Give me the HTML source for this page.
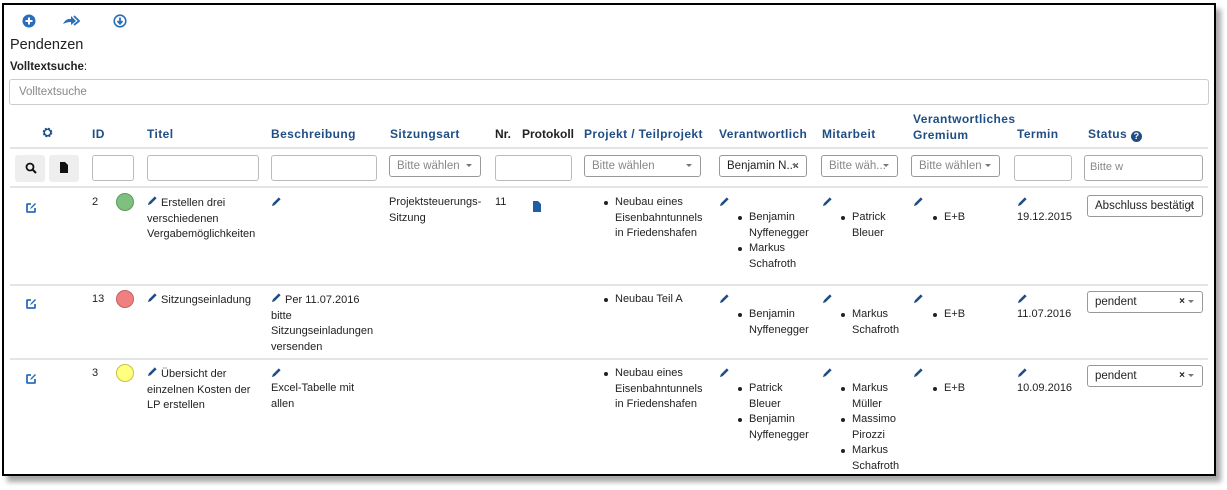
<!DOCTYPE html>
<html><head><meta charset="utf-8"><style>
*{margin:0;padding:0;box-sizing:border-box}
body{width:1227px;height:490px;background:#fff;position:relative;overflow:hidden;font-family:"Liberation Sans",Arial,sans-serif;font-size:11px;color:#222}
.frame{position:absolute;left:2px;top:3px;width:1214px;height:473px;border:2.5px solid #000;box-shadow:5px 6px 5px rgba(0,0,0,.35);background:#fff}
.a{position:absolute;line-height:15.5px;white-space:nowrap}
.h{font-weight:bold;color:#1f4e85;font-size:12px;letter-spacing:.4px}
.hl{position:absolute;left:10px;width:1198px;height:2px;background:#e4e4e4}
.in{position:absolute;height:26px;border:1px solid #bbb;border-radius:3px;background:#fff}
.sel{position:absolute;height:22px;border:1px solid #999;border-radius:3px;background:#fff;color:#888;font-size:11.5px;line-height:20px;padding-left:7px;overflow:hidden}
.sel:after{content:"";position:absolute;right:8px;top:8px;border:3.5px solid transparent;border-top:3.5px solid #777}
.btn{position:absolute;width:30px;height:27px;background:#eee;border-radius:3px}
ul{list-style:none}
li{position:relative;padding-left:0}
li:before{content:"";position:absolute;left:-11px;top:6px;width:4px;height:4px;border-radius:50%;background:#222}
.dot{position:absolute;width:18px;height:18px;border-radius:50%}
</style></head><body>
<div class="frame"></div>
<svg width="0" height="0" style="position:absolute"><defs>
<symbol id="p" viewBox="0 0 12 12"><path d="M1 11 L2 8 L8.5 1.5 L10.5 3.5 L4 10 Z" fill="#1f4e85"/></symbol>
<symbol id="e" viewBox="0 0 12 12"><path d="M6 2H2.5Q2 2 2 2.5V9.5Q2 10 2.5 10H9.5Q10 10 10 9.5V6" fill="none" stroke="#2a6ebb" stroke-width="1.8"/><path d="M5 7L6 5L10 1L11 2L7 6Z" fill="#2a6ebb"/></symbol>
</defs></svg>
<svg class="a" style="left:22px;top:14px" width="14" height="14"><circle cx="7" cy="7" r="6.5" fill="#2a6ebb"/><path d="M7 3.5V10.5M3.5 7H10.5" stroke="#fff" stroke-width="2"/></svg>
<svg class="a" style="left:62px;top:15px" width="18" height="12"><path d="M1 9Q4 3 9 4V1L14 6L9 10V7Q5 7 1 9Z" fill="#2a6ebb"/><path d="M12 1L17 6L12 10" fill="none" stroke="#2a6ebb" stroke-width="1.8"/></svg>
<svg class="a" style="left:113px;top:14px" width="14" height="14"><circle cx="7" cy="7" r="5.8" fill="none" stroke="#2a6ebb" stroke-width="1.6"/><path d="M7 3.5V9M4.5 7L7 9.8L9.5 7" fill="none" stroke="#2a6ebb" stroke-width="1.8"/></svg>
<div class="a" style="left:10px;top:36px;font-size:14.5px;line-height:18px">Pendenzen</div>
<div class="a" style="left:10px;top:60px;font-weight:bold;font-size:11.5px">Volltextsuche<span style="font-weight:normal">:</span></div>
<div class="in" style="left:9px;top:79px;width:1200px;height:26px;border-color:#ccc"></div>
<div class="a" style="left:19px;top:85px;color:#888;font-size:11.5px">Volltextsuche</div>
<svg class="a" style="left:42px;top:127px" width="11" height="11" viewBox="0 0 12 12"><circle cx="6" cy="6" r="4" fill="none" stroke="#1f4e85" stroke-width="2.5" stroke-dasharray="2 1.2"/><circle cx="6" cy="6" r="3.5" fill="none" stroke="#1f4e85" stroke-width="1.5"/></svg>
<div class="a h" style="left:92px;top:127px">ID</div>
<div class="a h" style="left:147px;top:127px">Titel</div>
<div class="a h" style="left:271px;top:127px">Beschreibung</div>
<div class="a h" style="left:390px;top:127px">Sitzungsart</div>
<div class="a h" style="left:495px;top:127px;color:#222;letter-spacing:0">Nr.</div>
<div class="a h" style="left:522px;top:127px;color:#222;letter-spacing:0">Protokoll</div>
<div class="a h" style="left:584px;top:127px">Projekt / Teilprojekt</div>
<div class="a h" style="left:719px;top:127px">Verantwortlich</div>
<div class="a h" style="left:822px;top:127px">Mitarbeit</div>
<div class="a h" style="left:913px;top:112px">Verantwortliches<br>Gremium</div>
<div class="a h" style="left:1017px;top:127px">Termin</div>
<div class="a h" style="left:1088px;top:127px">Status <span style="display:inline-block;width:11px;height:11px;border-radius:50%;background:#1f4e85;color:#fff;font-size:9px;line-height:11px;text-align:center;vertical-align:-1px;letter-spacing:0">?</span></div>
<div class="hl" style="top:147px"></div>
<div class="btn" style="left:15px;top:155px"></div>
<svg class="a" style="left:25px;top:162px" width="12" height="12"><circle cx="5" cy="5" r="3.5" fill="none" stroke="#111" stroke-width="1.8"/><path d="M7.5 7.5L11 11" stroke="#111" stroke-width="2"/></svg>
<div class="btn" style="left:49px;top:155px"></div>
<svg class="a" style="left:60px;top:162px" width="9" height="11"><path d="M0 0H5L8 3V11H0Z" fill="#111"/></svg>
<div class="in" style="left:92px;top:155px;width:42px"></div>
<div class="in" style="left:147px;top:155px;width:112px"></div>
<div class="in" style="left:271px;top:155px;width:106px"></div>
<div class="sel" style="left:389px;top:155px;width:92px">Bitte wählen</div>
<div class="in" style="left:495px;top:155px;width:77px"></div>
<div class="sel" style="left:584px;top:155px;width:117px">Bitte wählen</div>
<div class="sel" style="left:719px;top:155px;width:88px;color:#222">Benjamin N..<b style="font-size:10px">×</b></div>
<div class="sel" style="left:821px;top:155px;width:77px">Bitte wäh...</div>
<div class="sel" style="left:911px;top:155px;width:89px">Bitte wählen</div>
<div class="in" style="left:1014px;top:155px;width:58px"></div>
<div class="in" style="left:1084px;top:155px;width:119px;border-color:#aaa"></div>
<div class="a" style="left:1090px;top:160px;color:#888">Bitte w</div>
<div class="hl" style="top:186px"></div>
<svg class="a" style="left:25px;top:202px" width="12" height="12"><use href="#e"/></svg>
<div class="a" style="left:92px;top:195px">2</div>
<div class="dot" style="left:116px;top:193px;background:#7fbf7f;border:1px solid #5a9a5a"></div>
<div class="a" style="left:147px;top:195px"><svg width="11" height="11"><use href="#p"/></svg> Erstellen drei<br>verschiedenen<br>Vergabemöglichkeiten</div>
<svg class="a" style="left:271px;top:196px" width="11" height="11"><use href="#p"/></svg>
<div class="a" style="left:389px;top:195px">Projektsteuerungs-<br>Sitzung</div>
<div class="a" style="left:495px;top:195px">11</div>
<svg class="a" style="left:533px;top:201px" width="9" height="11"><path d="M0 0H5L8 3V11H0Z" fill="#1f5ea5"/></svg>
<ul class="a" style="left:615px;top:195px"><li>Neubau eines<br>Eisenbahntunnels<br>in Friedenshafen</li></ul>
<svg class="a" style="left:719px;top:196px" width="11" height="11"><use href="#p"/></svg>
<ul class="a" style="left:749px;top:210px"><li>Benjamin<br>Nyffenegger</li><li>Markus<br>Schafroth</li></ul>
<svg class="a" style="left:822px;top:196px" width="11" height="11"><use href="#p"/></svg>
<ul class="a" style="left:852px;top:210px"><li>Patrick<br>Bleuer</li></ul>
<svg class="a" style="left:913px;top:196px" width="11" height="11"><use href="#p"/></svg>
<ul class="a" style="left:944px;top:210px"><li>E+B</li></ul>
<svg class="a" style="left:1017px;top:196px" width="11" height="11"><use href="#p"/></svg>
<div class="a" style="left:1017px;top:210px">19.12.2015</div>
<div class="sel" style="left:1087px;top:195px;width:116px;color:#222">Abschluss bestätigt</div>
<div class="hl" style="top:284px"></div>
<svg class="a" style="left:25px;top:298px" width="12" height="12"><use href="#e"/></svg>
<div class="a" style="left:92px;top:292px">13</div>
<div class="dot" style="left:116px;top:290px;background:#f08080;border:1px solid #c06060"></div>
<div class="a" style="left:147px;top:292px"><svg width="11" height="11"><use href="#p"/></svg> Sitzungseinladung</div>
<div class="a" style="left:271px;top:292px"><svg width="11" height="11"><use href="#p"/></svg> Per 11.07.2016<br>bitte<br>Sitzungseinladungen<br>versenden</div>
<ul class="a" style="left:615px;top:292px"><li>Neubau Teil A</li></ul>
<svg class="a" style="left:719px;top:293px" width="11" height="11"><use href="#p"/></svg>
<ul class="a" style="left:749px;top:307px"><li>Benjamin<br>Nyffenegger</li></ul>
<svg class="a" style="left:822px;top:293px" width="11" height="11"><use href="#p"/></svg>
<ul class="a" style="left:852px;top:307px"><li>Markus<br>Schafroth</li></ul>
<svg class="a" style="left:913px;top:293px" width="11" height="11"><use href="#p"/></svg>
<ul class="a" style="left:944px;top:307px"><li>E+B</li></ul>
<svg class="a" style="left:1017px;top:293px" width="11" height="11"><use href="#p"/></svg>
<div class="a" style="left:1017px;top:307px">11.07.2016</div>
<div class="sel" style="left:1087px;top:291px;width:116px;color:#222">pendent<span style="position:absolute;right:17px;font-weight:bold;font-size:10px">×</span></div>
<div class="hl" style="top:358px"></div>
<svg class="a" style="left:25px;top:373px" width="12" height="12"><use href="#e"/></svg>
<div class="a" style="left:92px;top:366px">3</div>
<div class="dot" style="left:116px;top:364px;background:#ffff80;border:1px solid #c8c040"></div>
<div class="a" style="left:147px;top:366px"><svg width="11" height="11"><use href="#p"/></svg> Übersicht der<br>einzelnen Kosten der<br>LP erstellen</div>
<svg class="a" style="left:271px;top:367px" width="11" height="11"><use href="#p"/></svg>
<div class="a" style="left:271px;top:381px">Excel-Tabelle mit<br>allen</div>
<ul class="a" style="left:615px;top:366px"><li>Neubau eines<br>Eisenbahntunnels<br>in Friedenshafen</li></ul>
<svg class="a" style="left:719px;top:367px" width="11" height="11"><use href="#p"/></svg>
<ul class="a" style="left:749px;top:381px"><li>Patrick<br>Bleuer</li><li>Benjamin<br>Nyffenegger</li></ul>
<svg class="a" style="left:822px;top:367px" width="11" height="11"><use href="#p"/></svg>
<ul class="a" style="left:852px;top:381px"><li>Markus<br>Müller</li><li>Massimo<br>Pirozzi</li><li>Markus<br>Schafroth</li></ul>
<svg class="a" style="left:913px;top:367px" width="11" height="11"><use href="#p"/></svg>
<ul class="a" style="left:944px;top:381px"><li>E+B</li></ul>
<svg class="a" style="left:1017px;top:367px" width="11" height="11"><use href="#p"/></svg>
<div class="a" style="left:1017px;top:381px">10.09.2016</div>
<div class="sel" style="left:1087px;top:365px;width:116px;color:#222">pendent<span style="position:absolute;right:17px;font-weight:bold;font-size:10px">×</span></div>
</body></html>
